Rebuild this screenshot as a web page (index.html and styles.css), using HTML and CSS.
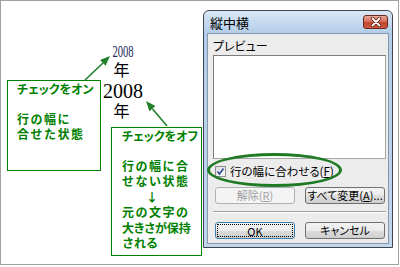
FILE: index.html
```html
<!DOCTYPE html>
<html lang="ja">
<head>
    <meta charset="UTF-8">
    <meta name="viewport" content="width=device-width, initial-scale=1.0">
    <title>縦中横</title>
    <link rel="stylesheet" href="styles.css">
</head>
<body>
    <div class="frame">
        <!-- Sample text: fitted to the line width, then not fitted -->
        <div class="tate">
            <span class="num-fit">2008</span>
            <span class="kanji">年</span>
            <span class="num">2008</span>
            <span class="kanji">年</span>
        </div>

        <svg class="arrows" width="399" height="265" viewBox="0 0 399 265">
            <line x1="85" y1="80" x2="103" y2="63" />
            <polygon points="110,56 105.6,65.8 100,60" />
            <line x1="167" y1="126" x2="152.4" y2="108.7" />
            <polygon points="146,101 155.5,106.1 149.4,111.3" />
        </svg>

        <div class="note note-on">
            <p class="note-head">チェックをオン</p>
            <p><span class="fit">行の幅に</span><br><span class="fit">合せた状態</span></p>
        </div>

        <div class="note note-off">
            <p class="note-head">チェックをオフ</p>
            <p>
                <span class="fit">行の幅に合</span><br>
                <span class="fit">せない状態</span><br>
                <span class="down">↓</span><br>
                <span class="fit">元の文字の</span><br>
                <span class="tight">大きさが保持</span><br>
                される
            </p>
        </div>

        <!-- Dialog -->
        <div class="dialog">
            <div class="titlebar">
                <span class="title">縦中横</span>
                <span class="close">
                    <svg width="12" height="10" viewBox="0 0 12 10">
                        <path d="M2.5 1.5 L9.5 8.5 M9.5 1.5 L2.5 8.5" stroke="#5b1c12" stroke-width="3.4" stroke-linecap="round" />
                        <path d="M2.5 1.5 L9.5 8.5 M9.5 1.5 L2.5 8.5" stroke="#fff" stroke-width="1.8" stroke-linecap="round" />
                    </svg>
                </span>
            </div>
            <div class="dialog-body">
                <div class="label">プレビュー</div>
                <div class="preview"></div>
                <div class="check">
                    <span class="check-box">
                        <svg width="9" height="9" viewBox="0 0 9 9">
                            <path d="M1.5 4.5 L3.5 7 L7.5 1.5" fill="none" stroke="#2b4c9c" stroke-width="1.6" />
                        </svg>
                    </span>
                    <span>行の幅に合わせる(<u>F</u>)</span>
                </div>
                <div class="btn-row">
                    <button class="btn" disabled>解除(<u>R</u>)</button>
                    <button class="btn">すべて変更(<u>A</u>)...</button>
                </div>
                <div class="sep"></div>
                <div class="btn-row">
                    <button class="btn btn-default"><span class="focus">OK</span></button>
                    <button class="btn">キャンセル</button>
                </div>
            </div>
        </div>

        <div class="ring"></div>
    </div>
</body>
</html>
```

FILE: styles.css
```css
body {
    margin: 0;
    background: #fff;
    font-family: "Noto Sans CJK JP", sans-serif;
}
.frame {
    position: relative;
    width: 399px;
    height: 265px;
    box-shadow: inset 0 0 0 1px #a0a0a0;
    overflow: hidden;
}

/* sample text */
.tate {
    position: absolute;
    left: 103px;
    top: 44px;
    width: 40px;
    display: flex;
    flex-direction: column;
    align-items: center;
    font-family: "Liberation Serif", serif;
    color: #000;
}
.num-fit {
    font-size: 16px;
    line-height: 15px;
    transform: scaleX(0.66);
    color: #18285a;
}
.kanji {
    font-family: "Noto Sans CJK JP", sans-serif;
    font-size: 16px;
    line-height: 16px;
    margin: 2px 3px 2px 0;
}
.num {
    font-size: 20px;
    line-height: 18px;
    margin-top: 3px;
}

/* arrows */
.arrows {
    position: absolute;
    left: 0;
    top: 0;
}
.arrows line {
    stroke: #23802a;
    stroke-width: 1.6;
}
.arrows polygon {
    fill: #23802a;
}

/* green notes */
.note {
    position: absolute;
    box-sizing: border-box;
    border: 1px solid #008000;
    padding: 0 0 0 9px;
    color: #008000;
    font-size: 12px;
    font-weight: 700;
    line-height: 15.5px;
    white-space: nowrap;
}
.note p {
    margin: 0 0 14px;
}
.note-head {
    font-feature-settings: "palt";
}
.note-on {
    left: 7px;
    top: 80px;
    width: 94px;
    height: 91px;
}
.note-off {
    left: 111px;
    top: 127px;
    width: 91px;
    height: 129px;
    padding-left: 10px;
}
.fit {
    letter-spacing: 1.5px;
}
.tight {
    font-feature-settings: "palt";
}
.down {
    margin-left: 24px;
}

/* dialog */
.dialog {
    position: absolute;
    left: 203px;
    top: 10px;
    width: 190px;
    height: 238px;
    box-sizing: border-box;
    border: 1px solid #3d4650;
    border-radius: 6px 6px 0 0;
    background: linear-gradient(#d9e7f6, #b4cde8 22px, #c2d7ee);
    padding: 0 3px 3px;
    display: flex;
    flex-direction: column;
}
.titlebar {
    height: 22px;
    display: flex;
    align-items: center;
    justify-content: space-between;
    padding: 0 1px 0 3px;
}
.title {
    font-size: 13px;
    color: #000;
}
.close {
    width: 25px;
    height: 14px;
    box-sizing: border-box;
    border: 1px solid #6b2a20;
    border-radius: 3px;
    background: linear-gradient(#e9a898, #d7715c 45%, #c2432b 55%, #cc5c44);
    display: flex;
    align-items: center;
    justify-content: center;
}
.dialog-body {
    flex: 1;
    background: #ececec;
    border: 1px solid #8698ae;
    padding: 5px 2px 0 5px;
    font-size: 11px;
    font-feature-settings: "palt";
    color: #000;
}
.label {
    line-height: 14px;
    font-size: 12px;
}
.preview {
    margin-top: 2px;
    height: 104px;
    box-sizing: border-box;
    border: 1px solid #7c7c7c;
    border-right-color: #a5a5a5;
    border-bottom-color: #a5a5a5;
    background: #fff;
}
.check {
    margin-top: 3px;
    height: 18px;
    display: flex;
    align-items: center;
    gap: 4px;
    padding-left: 2px;
    font-size: 11.5px;
}
.check-box {
    width: 11px;
    height: 11px;
    box-sizing: border-box;
    border: 1px solid #8e8f8f;
    background: linear-gradient(135deg, #dcdcdc, #fafafa);
    display: flex;
    align-items: center;
    justify-content: center;
}
.btn-row {
    display: flex;
    gap: 10px;
    padding-left: 2px;
    margin-top: 7px;
}
.btn {
    width: 80px;
    height: 17px;
    padding: 0;
    border: 1px solid #707070;
    border-radius: 3px;
    background: linear-gradient(#f3f3f3, #ebebeb 50%, #dddddd 50%, #cfcfcf);
    font-family: "Noto Sans CJK JP", sans-serif;
    font-size: 11px;
    font-feature-settings: "palt";
    line-height: 13px;
    color: #000;
}
.btn:disabled {
    border-color: #adb2b5;
    background: #f4f4f4;
    color: #a0a0a0;
}
.btn-default {
    border-color: #3c7fb1;
    padding: 1px;
}
.focus {
    display: block;
    height: 100%;
    box-sizing: border-box;
    border: 1px dotted #000;
}
.sep {
    margin: 7px 0 0;
    border-top: 1px solid #a0a0a0;
    border-bottom: 1px solid #fff;
}
.btn-row + .sep + .btn-row {
    margin-top: 9px;
}

.ring {
    position: absolute;
    left: 207px;
    top: 153px;
    width: 135px;
    height: 34px;
    box-sizing: border-box;
    border: 3px solid #1f7a24;
    border-radius: 50%;
}
```
